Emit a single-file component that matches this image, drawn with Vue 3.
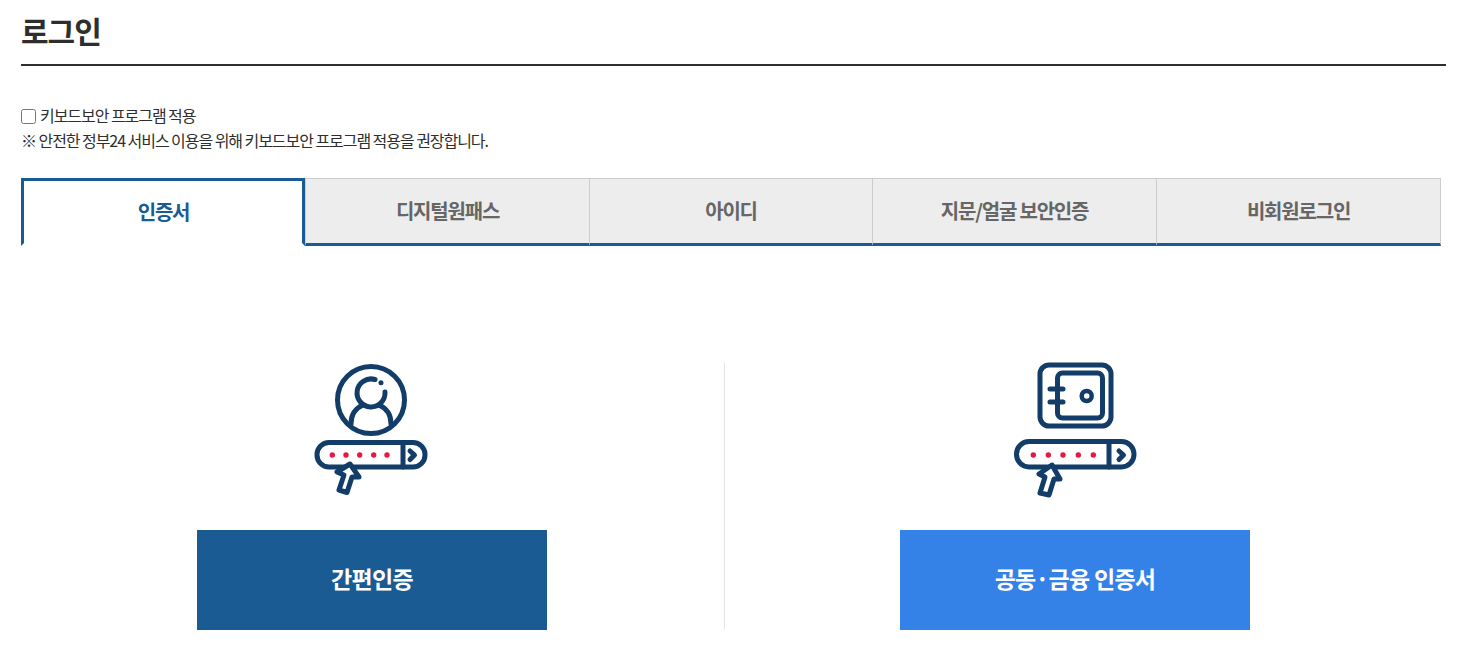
<template>
  <div class="page">
    <h1 class="title">로그인</h1>

    <div class="keyboard">
      <label class="keyboard-check">
        <input type="checkbox" />
        <span>키보드보안 프로그램 적용</span>
      </label>
      <p>※ 안전한 정부24 서비스 이용을 위해 키보드보안 프로그램 적용을 권장합니다.</p>
    </div>

    <ul class="tabs">
      <li
        v-for="tab in tabs"
        :key="tab"
        class="tab"
        :class="{ active: tab === activeTab }"
        @click="activeTab = tab"
      >
        {{ tab }}
      </li>
    </ul>

    <div class="methods">
      <div class="method">
        <svg class="icon icon-person" width="150" height="155" viewBox="0 0 150 155">
          <g fill="none" stroke="#123d68" stroke-width="5" stroke-linecap="round" stroke-linejoin="round">
            <circle cx="71" cy="50" r="33.500" />
            <path d="M75 29.500A14 14 0 1 0 85 42" />
            <path d="M51 74c0-10 5-16 12-19M91 74c0-10-5-16-12-19" />
            <rect x="17" y="92.500" width="108" height="24.500" rx="12" />
            <path d="M103 92.500V117" />
            <path d="M110 101l4.500 4-4.500 4.500" />
            <path d="M50 114L37 122l7 3-5 15 8 2.500L52 127h7z" fill="#fff" />
          </g>
          <circle cx="81" cy="32.700" r="2.500" fill="#123d68" />
          <g fill="#e8173f">
            <circle cx="32.300" cy="105" r="2.700" />
            <circle cx="46" cy="105" r="2.700" />
            <circle cx="59.700" cy="105" r="2.700" />
            <circle cx="73.700" cy="105" r="2.700" />
            <circle cx="87" cy="105" r="2.700" />
          </g>
        </svg>
        <button class="btn btn-simple" type="button">간편인증</button>
      </div>

      <div class="method">
        <svg class="icon" width="150" height="155" viewBox="0 0 150 155">
          <g fill="none" stroke="#123d68" stroke-width="5" stroke-linecap="round" stroke-linejoin="round">
            <rect x="40" y="15" width="71" height="61" rx="9" />
            <rect x="57.500" y="23" width="45" height="45" rx="5" />
            <path d="M50 39h13M50 52h13" />
            <circle cx="86.700" cy="46" r="5" stroke-width="4.500" />
            <rect x="16.500" y="91.500" width="117.500" height="25.500" rx="12.500" />
            <path d="M109 91.500V117" />
            <path d="M119 101l4.500 4-4.500 4.500" />
            <path d="M52 115L39 124l6 3-5 16 9 2 5-16h6z" fill="#fff" />
          </g>
          <g fill="#e8173f">
            <circle cx="33.300" cy="105" r="2.700" />
            <circle cx="48.300" cy="105" r="2.700" />
            <circle cx="63" cy="105" r="2.700" />
            <circle cx="78.300" cy="105" r="2.700" />
            <circle cx="93.300" cy="105" r="2.700" />
          </g>
        </svg>
        <button class="btn btn-cert" type="button">공동·금융 인증서</button>
      </div>
    </div>
  </div>
</template>

<script setup>
import { ref } from 'vue'

const tabs = ['인증서', '디지털원패스', '아이디', '지문/얼굴 보안인증', '비회원로그인']
const activeTab = ref('인증서')
</script>

<style>
html,
body {
  margin: 0;
  background: #fff;
}
</style>

<style scoped>
.page {
  width: 1425px;
  margin-left: 21px;
  font-family: "Noto Sans CJK KR", "Noto Sans", sans-serif;
  color: #2e2e2e;
}

.title {
  margin: 0;
  height: 66px;
  box-sizing: border-box;
  padding-top: 8px;
  border-bottom: 2px solid #2e2e2e;
  font-size: 30px;
  line-height: 44px;
  font-weight: 700;
  letter-spacing: -1px;
}

.keyboard {
  margin-top: 37px;
  font-size: 16px;
  line-height: 25px;
  letter-spacing: -1.05px;
}

.keyboard p {
  margin: 0;
}

.keyboard-check {
  display: flex;
  align-items: center;
  gap: 4px;
}

.keyboard-check input {
  width: 15px;
  height: 15px;
  margin: 2px 0 0;
}

.tabs {
  display: grid;
  grid-template-columns: 284px 284px 283px 284px 285px;
  height: 68px;
  margin: 25px 0 0;
  padding: 0;
  list-style: none;
}

.tab {
  box-sizing: border-box;
  border-top: 1px solid #ccc;
  border-left: 1px solid #ccc;
  border-bottom: 3px solid #1b5b94;
  background: #ededed;
  color: #666;
  font-size: 20px;
  font-weight: 700;
  line-height: 64px;
  letter-spacing: -1.2px;
  text-align: center;
  cursor: pointer;
}

.tab:last-child {
  border-right: 1px solid #ccc;
}

.tab.active {
  padding-left: 1px;
  border: 3px solid #1b5b94;
  border-bottom-color: #fff;
  background: #fff;
  color: #1b5b94;
  line-height: 62px;
}

.methods {
  display: grid;
  grid-template-columns: 703px 703px;
  margin-top: 116px;
}

.method {
  box-sizing: border-box;
  display: flex;
  flex-direction: column;
  align-items: center;
  height: 268px;
  padding-right: 1px;
}

.method + .method {
  border-left: 1px solid #e5e5e5;
  padding-right: 2px;
}

.icon {
  margin-top: -12px;
  margin-bottom: 25px;
  flex: none;
}

.icon-person {
  margin-left: 6px;
}

.btn {
  width: 350px;
  height: 100px;
  flex: none;
  padding: 0 0 4px;
  border: 0;
  color: #fff;
  font-family: inherit;
  font-size: 23px;
  font-weight: 700;
  letter-spacing: -0.7px;
  cursor: pointer;
}

.btn-simple {
  background: #1b5b94;
}

.btn-cert {
  background: #3481e8;
}
</style>
